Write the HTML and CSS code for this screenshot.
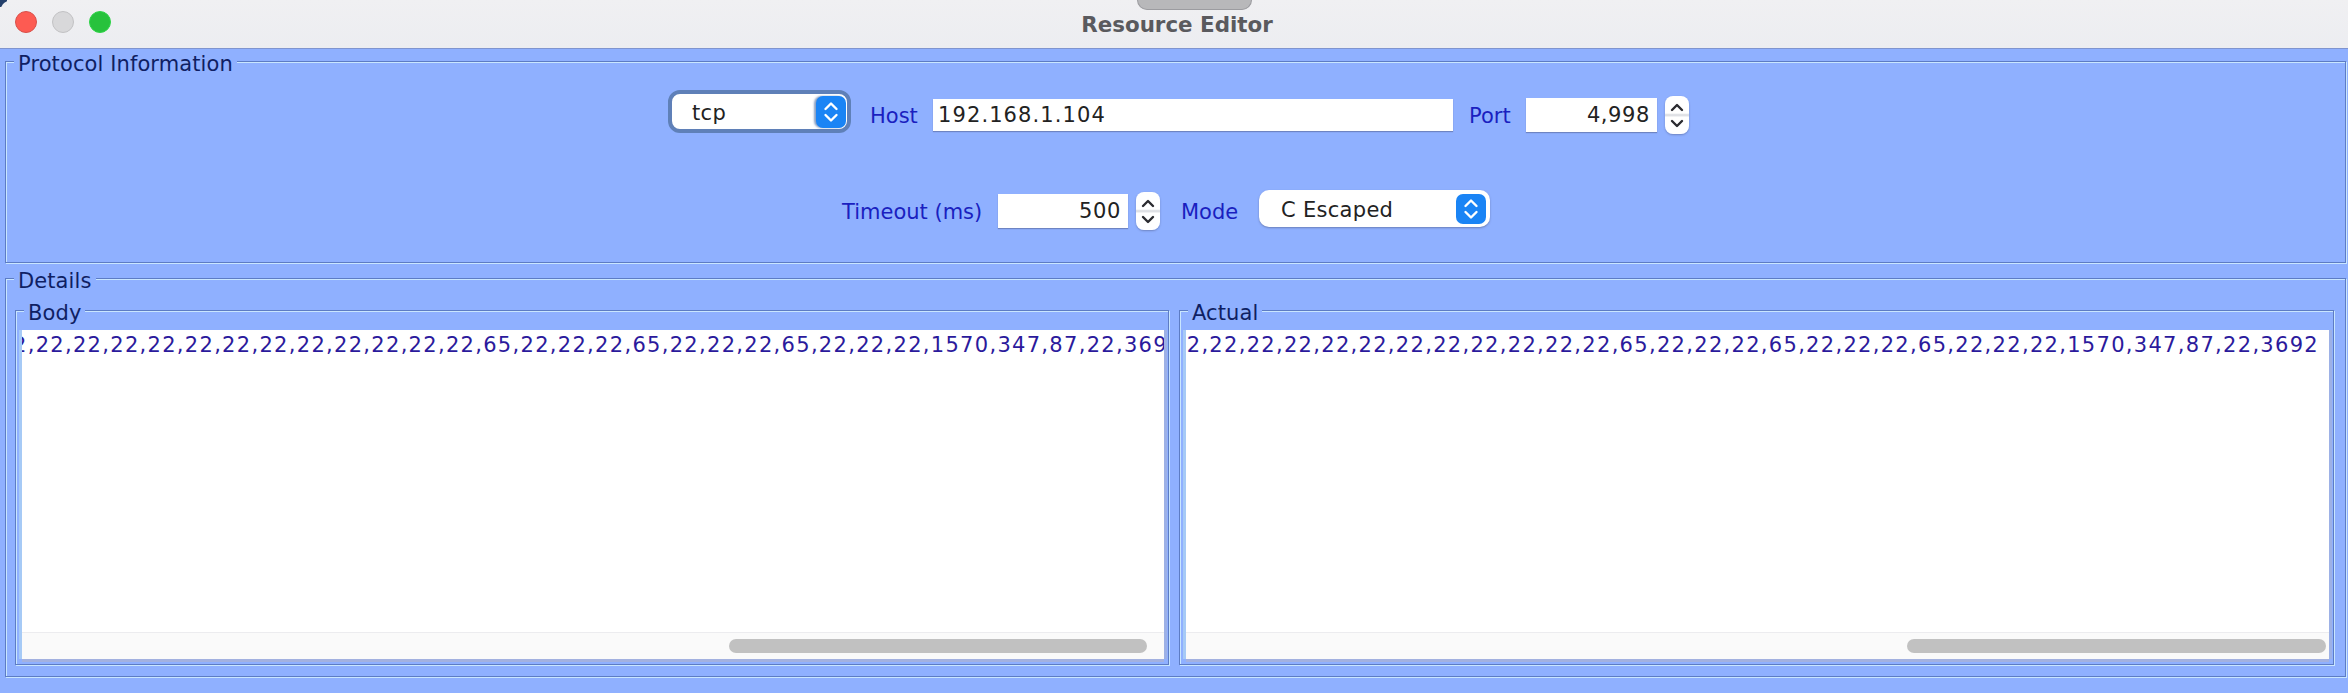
FILE: index.html
```html
<!DOCTYPE html>
<html lang="en">
<head>
<meta charset="utf-8">
<title>Resource Editor</title>
<link rel="stylesheet" href="styles.css">
</head>
<body>
<div class="window">
  <header class="titlebar">
    <div class="lights">
      <span class="light red"></span>
      <span class="light gray"></span>
      <span class="light green"></span>
    </div>
    <span class="notch"></span>
    <h1 class="title">Resource Editor</h1>
  </header>
  <main class="content">
    <section class="panel protocol">
      <span class="legend">Protocol Information</span>
      <div class="row row-a">
        <div class="combo combo-tcp">
          <span class="combo-text">tcp</span>
          <span class="combo-btn"><svg viewBox="0 0 30 30"><path d="M9.5 12 15 6.500 20.500 12M9.500 18 15 23.500 20.500 18"/></svg></span>
        </div>
        <label class="label l-host">Host</label>
        <div class="field f-host">192.168.1.104</div>
        <label class="label l-port">Port</label>
        <div class="field num f-port">4,998</div>
        <span class="spinner"><svg viewBox="0 0 24 38"><path d="M7 14 12 9 17 14M7 25 12 30 17 25"/></svg></span>
      </div>
      <div class="row row-b">
        <label class="label l-timeout">Timeout (ms)</label>
        <div class="field num f-timeout">500</div>
        <span class="spinner"><svg viewBox="0 0 24 38"><path d="M7 14 12 9 17 14M7 25 12 30 17 25"/></svg></span>
        <label class="label l-mode">Mode</label>
        <div class="combo combo-mode">
          <span class="combo-text">C Escaped</span>
          <span class="combo-btn"><svg viewBox="0 0 30 30"><path d="M9.500 12 15 6.500 20.500 12M9.500 18 15 23.500 20.500 18"/></svg></span>
        </div>
      </div>
    </section>
    <section class="panel details">
      <span class="legend">Details</span>
      <div class="panes">
        <div class="panel pane pane-body">
          <span class="legend">Body</span>
          <div class="view">
            <div class="text text-body"><span class="line">2,22,22,22,22,22,22,22,22,22,22,22,22,65,22,22,22,65,22,22,22,65,22,22,22,1570,347,87,22,3692</span></div>
            <div class="track"><span class="thumb thumb-body"></span></div>
          </div>
        </div>
        <div class="panel pane pane-actual">
          <span class="legend">Actual</span>
          <div class="view">
            <div class="text text-actual"><span class="line">2,22,22,22,22,22,22,22,22,22,22,22,65,22,22,22,65,22,22,22,65,22,22,22,1570,347,87,22,3692</span></div>
            <div class="track"><span class="thumb thumb-actual"></span></div>
          </div>
        </div>
      </div>
    </section>
  </main>
</div>
</body>
</html>
```
FILE: styles.css
```css
* { box-sizing: border-box; }
html, body { margin: 0; padding: 0; height: 100%; }
body { background: #8fb0ff; font-family: "DejaVu Sans", sans-serif; overflow: hidden; }
.window { display: flex; flex-direction: column; height: 693px; width: 2348px; }

.titlebar { position: relative; height: 49px; display: flex; align-items: center; justify-content: center; background: linear-gradient(#f0f0f2, #ecedf1); border-bottom: 1px solid #7f94cf; }
.titlebar::before { content: ""; position: absolute; left: 0; top: 0; width: 7px; height: 7px; background: radial-gradient(circle at 11px 11px, transparent 10px, #24406b 11px); }
.lights { position: absolute; left: 15px; top: 11px; display: flex; gap: 15px; }
.light { width: 22px; height: 22px; border-radius: 50%; border: 1px solid; }
.red { background: #fd5b52; border-color: #d8504a; }
.gray { background: #d8d8da; border-color: #c2c2c4; }
.green { background: #27c23c; border-color: #2ed447; }
.notch { position: absolute; left: 1137px; top: 0; width: 115px; height: 10px; background: #b8b8ba; border: 1px solid #9c9ca0; border-top: 0; border-radius: 0 0 11px 11px; }
.title { margin: 0; font-size: 21.400px; font-weight: 700; color: #5a5a5e; transform: translateX(3px); }

.content { display: flex; flex-direction: column; padding: 12px 2px 0 5px; gap: 15px; }
.panel { position: relative; border: 1px solid #5d7cc4; box-shadow: inset 1px 1px 0 #c9e6ff, 1px 1px 0 #c9e6ff; }
.legend { position: absolute; left: 8px; top: -10px; padding: 0 4px; line-height: 24px; font-size: 21px; letter-spacing: .1px; color: #0f1f63; background: #8fb0ff; }

.protocol { height: 202px; padding: 28px 0 0 0; display: flex; flex-direction: column; gap: 50px; }
.row { display: flex; align-items: center; }
.row-a { height: 50px; padding-left: 662px; }
.row-b { height: 42px; padding-left: 836px; }

.label { font-size: 21px; color: #1a1fc0; flex: none; white-space: nowrap; padding-top: 2px; }
.field { background: #fff; font-size: 21px; letter-spacing: 1.1px; color: #222; padding: 0 5px; display: flex; align-items: center; flex: none; box-shadow: 0 1px 1px rgba(70,80,120,.45); }
.num { justify-content: flex-end; padding-right: 7px; letter-spacing: .6px; }

.combo { display: flex; align-items: center; background: #fff; flex: none; position: relative; font-size: 21px; color: #222; }
.combo-text { flex: 1; white-space: nowrap; padding-top: 2px; letter-spacing: .3px; }
.combo-btn { display: block; background: #1a84f5; border-radius: 7px; width: 30px; flex: none; }
.combo-btn svg { display: block; width: 100%; height: 100%; }
.combo-btn path, .spinner path { fill: none; stroke-width: 2.4; stroke-linecap: round; stroke-linejoin: round; }
.combo-btn path { stroke: #fff; }
.combo-tcp { width: 183px; height: 43px; margin-bottom: 7px; padding: 0 1px 0 20px; border-radius: 12px; border: 4px solid #5f80b8; }
.combo-tcp .combo-btn { height: 32px; box-shadow: -2px 0 2px rgba(90,120,170,.7); }
.combo-mode { width: 231px; height: 37px; margin-bottom: 5px; padding: 0 4px 0 22px; border-radius: 10px; box-shadow: 0 1px 2px rgba(70,80,120,.5); }
.combo-mode .combo-btn { height: 30px; }

.l-host { margin-left: 19px; width: 48px; }
.f-host { margin-left: 15px; width: 520px; height: 32px; }
.l-port { margin-left: 16px; width: 42px; }
.f-port { margin-left: 15px; width: 131px; height: 34px; }
.l-timeout { width: 140px; }
.f-timeout { margin-left: 16px; width: 130px; height: 34px; }
.l-mode { margin-left: 21px; width: 78px; }

.spinner { display: block; flex: none; width: 24px; height: 38px; margin-left: 8px; background: linear-gradient(#fff 45%, #d6d8de 50%, #fff 56%); border-radius: 8px; box-shadow: 0 1px 2px rgba(70,80,120,.45); }
.spinner svg { display: block; width: 100%; height: 100%; }
.spinner path { stroke: #2b2b30; }

.details { height: 399px; padding: 31px 11px 11px 9px; }
.panes { display: flex; gap: 10px; height: 100%; }
.pane { min-width: 0; padding: 19px 4px 5px 6px; }
.pane-body { width: 1154px; }
.pane-actual { width: 1155px; }
.view { display: flex; flex-direction: column; height: 100%; background: #fff; box-shadow: -3px 0 0 #a6caf6, 3px 0 0 #9db1e6, 0 3px 0 #a3b1e0; }
.text { flex: 1; display: flex; overflow: hidden; min-height: 0; padding-top: 1px; }
.line { white-space: nowrap; font-size: 21px; line-height: 28px; letter-spacing: 1.3px; color: #2b1a9c; }
.text-body .line { margin-left: -9px; }
.text-actual { justify-content: flex-end; padding-right: 10px; }
.text-actual .line { flex: none; }

.track { height: 27px; flex: none; background: #fafafa; border-top: 1px solid #ececef; padding-top: 6px; display: flex; }
.thumb { display: block; height: 14px; border-radius: 7px; background: #c1c1c1; }
.thumb-body { margin-left: 707px; width: 418px; }
.thumb-actual { margin-left: 721px; width: 419px; }
```
